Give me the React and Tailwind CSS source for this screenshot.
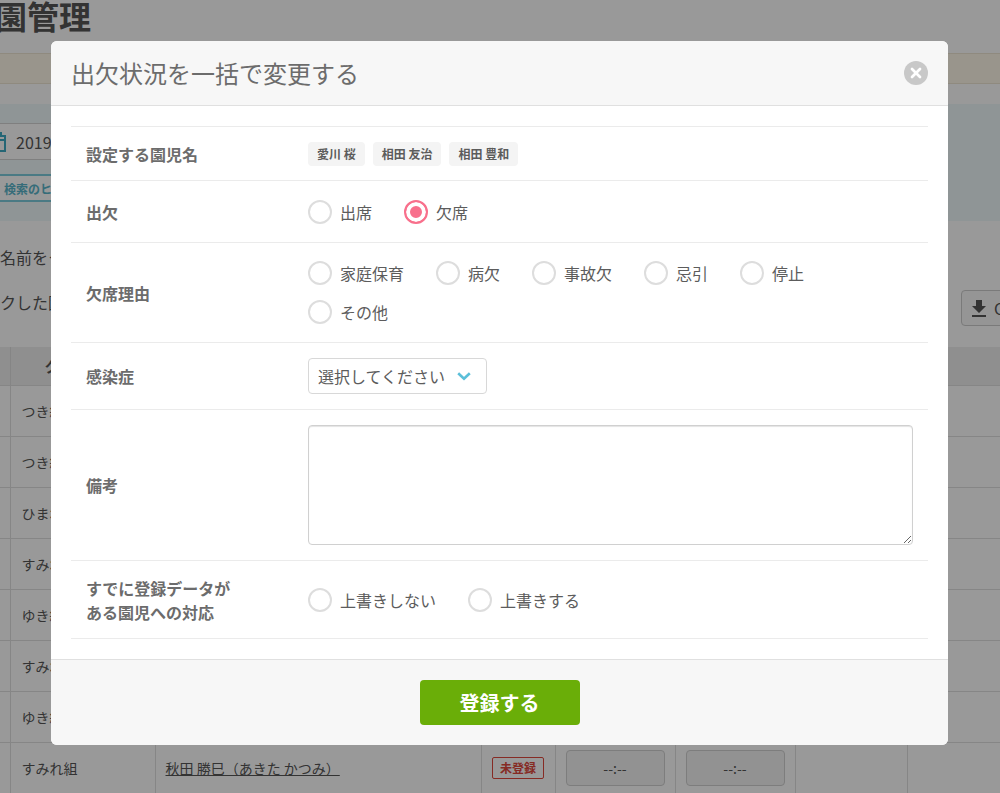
// App.jsx
// Attendance list with the bulk edit dialog open on top of it.

import React, { useState } from 'react';
import { X } from 'lucide-react';

const children = ['愛川 桜', '相田 友治', '相田 豊和'];
const reasons = ['家庭保育', '病欠', '事故欠', '忌引', '停止', 'その他'];

const rows = [
  { group: 'つき組' },
  { group: 'つき組' },
  { group: 'ひまわり組' },
  { group: 'すみれ組' },
  { group: 'ゆき組' },
  { group: 'すみれ組' },
  { group: 'ゆき組' },
  { group: 'すみれ組', name: '秋田 勝巳（あきた かつみ）', status: '未登録' },
];

const CalendarIcon = () => (
  <svg viewBox="0 0 18 20" className="h-5 w-[18px] shrink-0" fill="none" stroke="#3fabc4" strokeWidth="2" aria-hidden="true">
    <path d="M1 4h16v15H1zM1 8h16M5 0v4M13 0v4" />
  </svg>
);

const DownloadIcon = () => (
  <svg viewBox="0 0 14 17" className="h-[17px] w-[14px] shrink-0" fill="#555" aria-hidden="true">
    <path d="M4 0h6v6h4l-7 7-7-7h4zM0 15h14v2H0z" />
  </svg>
);

const TimeButton = () => (
  <button type="button" className="block h-9 w-full rounded-sm border border-[#d0d0d0] bg-[#f4f4f4] text-sm text-[#555]">
    --:--
  </button>
);

// The list behind the dialog
const AttendancePage = () => (
  <div className="text-[#555]" aria-hidden="true">
    <h1 className="-ml-[5px] h-[53px] text-[32px] leading-[30px] font-bold">園管理</h1>
    <div className="h-[31px] border-y border-[#efe6d4] bg-[#fff9ea]" />

    <div className="mt-5 h-[117px] bg-[#eef8fb] pt-[19px]">
      <div className="-ml-[13px] flex h-[37px] w-60 items-center gap-[10px] border border-[#d4d4d4] bg-white text-base">
        <CalendarIcon />
        <span>2019/04/01</span>
      </div>
      <button type="button" className="-ml-3 mt-[14px] h-7 w-40 rounded-xs border-2 border-[#7ccbdd] bg-white pt-px pl-[14px] text-left text-xs font-bold text-[#5ab5ca]">
        検索のヒント
      </button>
    </div>

    <p className="mt-6 text-base leading-6">名前をクリック</p>
    <div className="mt-[21px] flex h-9 items-start justify-between">
      <p className="text-base leading-6">クした園児</p>
      <button type="button" className="-mr-12 flex h-9 w-[87px] items-center gap-2 rounded-sm border border-[#ccc] bg-[#f9f9f9] pl-[10px] text-base">
        <DownloadIcon />
        CSV
      </button>
    </div>

    <table className="mt-[21px] w-full table-fixed border-collapse text-sm">
      <colgroup>
        <col className="w-[10px]" />
        <col className="w-[145px]" />
        <col className="w-[326px]" />
        <col className="w-[74px]" />
        <col className="w-[120px]" />
        <col className="w-[120px]" />
        <col className="w-[112px]" />
        <col />
      </colgroup>
      <thead>
        <tr className="h-[38px] bg-[#eee]">
          <th />
          <th className="border-l border-[#dedede] pl-[34px] text-left font-bold">クラス</th>
          <th colSpan={6} />
        </tr>
      </thead>
      <tbody>
        {rows.map((row, i) => (
          <tr key={i} className="h-[51px] border-t border-[#e0e0e0]">
            <td />
            <td className="border-x border-[#e0e0e0] pl-[11px]">{row.group}</td>
            <td className="border-r border-[#e0e0e0] pl-[10px]">
              {row.name && <a href="#child" className="underline">{row.name}</a>}
            </td>
            <td className="border-r border-[#e0e0e0] text-center">
              {row.status && (
                <span className="inline-block rounded-xs border border-[#e0483c] px-[7px] text-xs leading-5 font-bold text-[#e0483c]">
                  {row.status}
                </span>
              )}
            </td>
            <td className="border-r border-[#e0e0e0] px-[10px]">{row.status && <TimeButton />}</td>
            <td className="border-r border-[#e0e0e0] px-[10px]">{row.status && <TimeButton />}</td>
            <td className="border-r border-[#e0e0e0]" />
            <td />
          </tr>
        ))}
      </tbody>
    </table>
  </div>
);

const Row = ({ id, label, className, children: content }) => (
  <div className={`flex items-center border-b border-[#ebebeb] px-[15px] ${className}`}>
    <div id={id} className="w-[222px] shrink-0 text-base leading-6 font-bold text-[#6c6c6c]">{label}</div>
    <div className="min-w-0 flex-1">{content}</div>
  </div>
);

const RadioGroup = ({ name, labelledBy, options, value, onChange }) => (
  <div role="radiogroup" aria-labelledby={labelledBy} className="flex flex-wrap gap-x-8 gap-y-[15px]">
    {options.map((option) => (
      <label key={option} className="flex h-6 items-center gap-2 text-base leading-6 text-[#5c5c5c]">
        <input
          type="radio"
          name={name}
          checked={value === option}
          onChange={() => onChange(option)}
          className="size-6 appearance-none rounded-full border-2 border-[#ddd] bg-white checked:border-[#f8708c] checked:bg-[#f8708c] checked:shadow-[inset_0_0_0_4px_#fff]"
        />
        {option}
      </label>
    ))}
  </div>
);

const BulkEditDialog = () => {
  const [attendance, setAttendance] = useState('欠席');
  const [reason, setReason] = useState('');
  const [overwrite, setOverwrite] = useState('');

  return (
    <form role="dialog" aria-labelledby="dialog-title" className="w-full overflow-hidden rounded-md bg-white">
      <header className="flex h-[65px] items-center justify-between border-b border-[#e0e0e0] bg-[#f7f7f7] px-5">
        <h2 id="dialog-title" className="text-2xl text-[#6c6c6c]">出欠状況を一括で変更する</h2>
        <button type="button" aria-label="閉じる" className="flex size-6 items-center justify-center rounded-full bg-[#c8c8c8] text-white">
          <X size={16} strokeWidth={4} />
        </button>
      </header>

      <div className="px-5 py-5">
        <div className="border-t border-[#ebebeb]">
          <Row label="設定する園児名" className="h-[54px]">
            <ul className="flex gap-2">
              {children.map((child) => (
                <li key={child} className="rounded-sm bg-[#f4f4f4] px-[9px] text-xs leading-6 font-bold text-[#5c5c5c]">{child}</li>
              ))}
            </ul>
          </Row>
          <Row id="attendance" label="出欠" className="h-[62px]">
            <RadioGroup name="attendance" labelledBy="attendance" options={['出席', '欠席']} value={attendance} onChange={setAttendance} />
          </Row>
          <Row id="reason" label="欠席理由" className="py-[18px]">
            <RadioGroup name="reason" labelledBy="reason" options={reasons} value={reason} onChange={setReason} />
          </Row>
          <Row label={<label htmlFor="infection">感染症</label>} className="py-[15px]">
            <div className="relative w-[179px]">
              <select id="infection" className="block h-9 w-full appearance-none rounded-sm border border-[#d8d8d8] bg-white pl-[9px] text-base text-[#5c5c5c]">
                <option>選択してください</option>
              </select>
              <svg viewBox="0 0 14 9" className="pointer-events-none absolute top-[14px] right-4 h-[9px] w-[14px]" fill="none" stroke="#5bbfd9" strokeWidth="2.6" aria-hidden="true">
                <path d="M1.2 1.2 7 6.8l5.8-5.6" />
              </svg>
            </div>
          </Row>
          <Row label={<label htmlFor="note">備考</label>} className="py-[15px]">
            <textarea id="note" className="block h-[120px] w-full rounded-sm border border-[#d0d0d0] bg-white shadow-[inset_0_1px_1px_#e4e4e4]" />
          </Row>
          <Row id="overwrite" label={<>すでに登録データが<br />ある園児への対応</>} className="h-[78px]">
            <RadioGroup name="overwrite" labelledBy="overwrite" options={['上書きしない', '上書きする']} value={overwrite} onChange={setOverwrite} />
          </Row>
        </div>
      </div>

      <footer className="flex justify-center border-t border-[#e0e0e0] bg-[#f7f7f7] py-5">
        <button type="button" className="h-[45px] w-40 rounded-sm bg-[#6aae08] text-xl font-bold text-white">登録する</button>
      </footer>
    </form>
  );
};

export default function App() {
  return (
    <div className="relative h-screen overflow-hidden bg-white font-['Noto_Sans_CJK_JP',sans-serif]">
      <AttendancePage />
      <div className="absolute inset-0 flex items-start bg-black/40 pt-[41px] pr-[52px] pl-[51px]">
        <BulkEditDialog />
      </div>
    </div>
  );
}
